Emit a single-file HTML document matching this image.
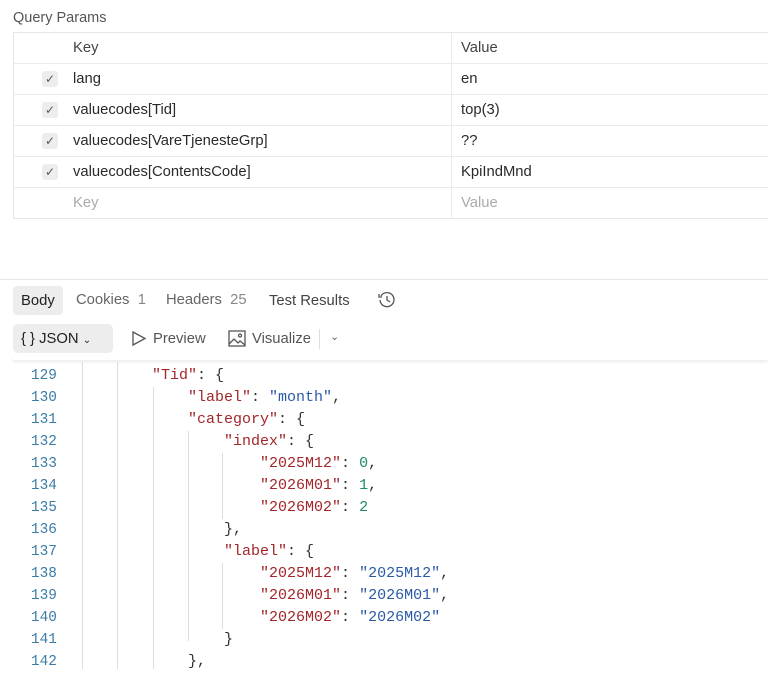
<!DOCTYPE html><html><head><style>
body{margin:0;width:768px;height:669px;overflow:hidden;background:#fff;font-family:"Liberation Sans",sans-serif;color:#212121;position:relative}
.a{position:absolute}
.t{left:13px;top:32px;width:760px;border:1px solid #e6e6e6}
.r{height:30px;border-bottom:1px solid #ebebeb;position:relative;font-size:14.8px;color:#2a2a2a}
.r:last-child{border-bottom:none}
.r span{position:absolute;top:0;line-height:30px}
.k{left:59px}.v{left:447px}
.d{position:absolute;left:437px;top:0;bottom:0;border-left:1px solid #ebebeb}
.cb{position:absolute;left:28px;top:7px;width:16px;height:16px;background:#ededed;border-radius:3px;font-size:12px;text-align:center;line-height:16px;color:#555}
.code{font-family:"Liberation Mono",monospace;font-size:15px;line-height:22px;white-space:pre}
.s{color:#a3262a}.st{color:#2b5aa8}.n{color:#1a8a6a}.p{color:#333}
.g{position:absolute;border-left:1px solid #ddd}
.tb{font-size:14.8px;line-height:20px}
</style></head><body>
<div class="a" style="left:13px;top:9px;font-size:14.5px;color:#555;line-height:18px">Query Params</div>
<div class="a t">
<div class="d"></div>
<div class="r"><span class="k" style="color:#444">Key</span><span class="v" style="color:#444">Value</span></div>
<div class="r"><div class="cb">✓</div><span class="k">lang</span><span class="v">en</span></div>
<div class="r"><div class="cb">✓</div><span class="k">valuecodes[Tid]</span><span class="v">top(3)</span></div>
<div class="r"><div class="cb">✓</div><span class="k">valuecodes[VareTjenesteGrp]</span><span class="v">??</span></div>
<div class="r"><div class="cb">✓</div><span class="k">valuecodes[ContentsCode]</span><span class="v">KpiIndMnd</span></div>
<div class="r"><span class="k" style="color:#aaa">Key</span><span class="v" style="color:#aaa">Value</span></div>
</div>
<div class="a" style="left:0;top:279px;width:768px;border-top:1px solid #e6e6e6"></div>
<div class="a" style="left:13px;top:286px;width:50px;height:29px;background:#ededed;border-radius:4px"></div>
<div class="a tb" style="top:291px;left:21px">Body</div>
<div class="a tb" style="top:290px;left:76px;color:#666">Cookies <span style="color:#888">&nbsp;1</span></div>
<div class="a tb" style="top:290px;left:166px;color:#666">Headers <span style="color:#888">&nbsp;25</span></div>
<div class="a tb" style="top:291px;left:269px;color:#444">Test Results</div>
<svg class="a" style="left:377px;top:290px" width="20" height="20" viewBox="0 0 20 20" fill="none" stroke="#555" stroke-width="1.3"><path d="M4 6A7 7 0 1 1 3 10"/><path d="M2 4v3h3"/><path d="M10 6v4l3 2"/></svg>
<div class="a" style="left:13px;top:324px;width:100px;height:29px;background:#ededed;border-radius:5px"></div>
<div class="a tb" style="left:21px;top:329px">{ } JSON <span style="font-size:10px">⌄</span></div>
<svg class="a" style="left:131px;top:330px" width="16" height="17"><path d="M2 2L14 8.5L2 15Z" fill="none" stroke="#555" stroke-width="1.3"/></svg>
<div class="a tb" style="left:153px;top:329px;color:#555">Preview</div>
<svg class="a" style="left:228px;top:330px" width="18" height="17" fill="none" stroke="#555" stroke-width="1.3"><rect x="1" y="1" width="16" height="15"/><path d="M1 14l5-5 4 4 2-2 5 4"/><circle cx="12" cy="5.5" r="1.5"/></svg>
<div class="a tb" style="left:252px;top:329px;color:#555">Visualize</div>
<div class="a" style="left:319px;top:329px;height:20px;border-left:1px solid #ddd"></div>
<div class="a" style="left:330px;top:330px;font-size:11px;color:#666">⌄</div>
<div class="a" style="left:13px;top:356px;width:755px;height:4px;box-shadow:0 2px 3px rgba(0,0,0,.08)"></div>
<div class="g" style="left:82px;top:362px;height:307px"></div>
<div class="g" style="left:117px;top:362px;height:307px"></div>
<div class="g" style="left:153px;top:387px;height:282px"></div>
<div class="g" style="left:188px;top:431px;height:210px"></div>
<div class="g" style="left:222px;top:453px;height:66px"></div>
<div class="g" style="left:222px;top:563px;height:66px"></div>
<div class="a code" style="left:31px;top:365px;color:#3a7ca5;font-size:14.4px">129
130
131
132
133
134
135
136
137
138
139
140
141
142</div>
<div class="a code p" style="left:152px;top:365px"><span class="s">"Tid"</span>: {
    <span class="s">"label"</span>: <span class="st">"month"</span>,
    <span class="s">"category"</span>: {
        <span class="s">"index"</span>: {
            <span class="s">"2025M12"</span>: <span class="n">0</span>,
            <span class="s">"2026M01"</span>: <span class="n">1</span>,
            <span class="s">"2026M02"</span>: <span class="n">2</span>
        },
        <span class="s">"label"</span>: {
            <span class="s">"2025M12"</span>: <span class="st">"2025M12"</span>,
            <span class="s">"2026M01"</span>: <span class="st">"2026M01"</span>,
            <span class="s">"2026M02"</span>: <span class="st">"2026M02"</span>
        }
    },</div>
</body></html>
